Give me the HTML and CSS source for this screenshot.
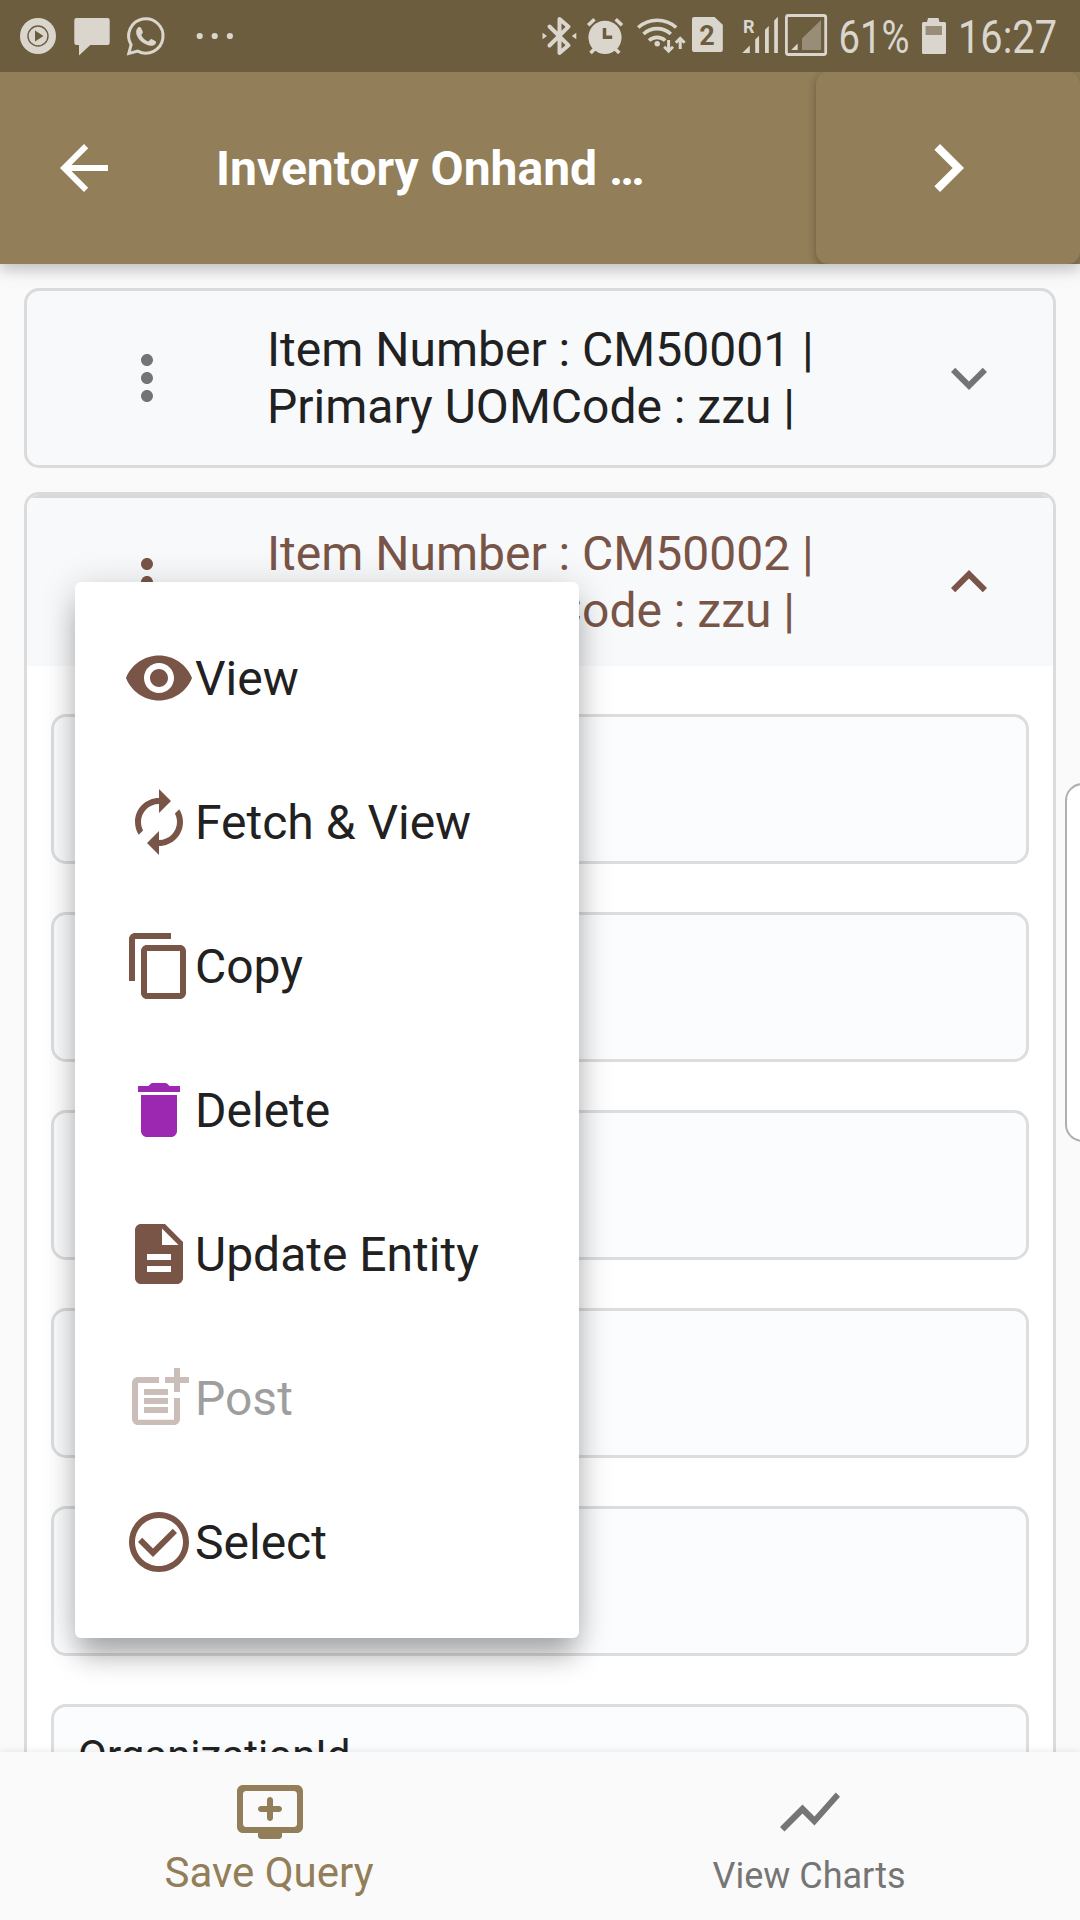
FILE: index.html
```html
<!DOCTYPE html>
<html lang="en">
<head>
<meta charset="utf-8">
<title>Inventory Onhand</title>
<link rel="stylesheet" href="styles.css">
</head>
<body>
<div class="screen">
  <div class="statusbar">
    <svg class="status-icons" width="240" height="72" viewBox="0 0 240 72">
      <circle cx="38" cy="36" r="18"/>
      <circle class="cut-line" cx="38" cy="36" r="10"/>
      <path class="cut" d="M35 30.5v11l8.5-5.5z"/>
      <path d="M76.500 18h31a2.200 2.200 0 0 1 2.200 2.200v22.600a2.200 2.200 0 0 1-2.200 2.200H90.300L79 55.500V45h-2.500a2.200 2.200 0 0 1-2.200-2.200V20.200a2.200 2.200 0 0 1 2.200-2.200z"/>
      <path class="line" stroke-width="3" d="M128.800 53.400l2.300-8.600a17.200 17.200 0 1 1 6.600 6.300z"/>
      <path d="M138.400 27.200c.7-.5 2.100-.4 2.600.6l1.900 4.300c.3.800-1.400 2.500-1.600 3 .9 2.700 4.300 5.600 7 6.300.8-.2 2.300-2.700 3.200-2.400l4.200 2.200c.6.600.2 2.400-.7 3.200-5 4.700-19-4-18.900-12.500.1-1.800.9-3.700 2.300-4.700z"/>
      <circle cx="199.700" cy="36" r="3.100"/><circle cx="214.700" cy="36" r="3.100"/><circle cx="229.900" cy="36" r="3.100"/>
    </svg>
    <div class="status-right">
      <svg class="status-icons" width="38" height="72" viewBox="541 0 38 72">
        <path class="line" stroke-width="4" stroke-linejoin="round" stroke-linecap="round" d="M549.500 26.500l19 18.800-9 7.700V19l9 7.700-19 18.800"/>
        <path d="M542.500 32.800l4.500 3.200-4.500 3.200zM576.300 32.800l-4.500 3.200 4.500 3.200z"/>
      </svg>
      <svg class="status-icons" width="52" height="72" viewBox="579 0 52 72">
        <circle cx="605" cy="37.300" r="16.600"/>
        <path class="line" stroke-width="3.600" d="M588.200 25.200l6.300-6M615.700 19.200l6.300 6M590.500 53l5-5M619.300 53l-5-5"/>
        <path class="hands" d="M604.500 28v9.200h7.700"/>
      </svg>
      <svg class="status-icons" width="56" height="72" viewBox="631 0 56 72">
        <path class="line" stroke-width="3.600" d="M638.200 27.500a28.500 28.500 0 0 1 38 0M643.500 34a20 20 0 0 1 27.300 0M649 40.500a12 12 0 0 1 16.200 0"/>
        <circle cx="657.200" cy="43.700" r="2.700"/>
        <path class="line" stroke-width="3" d="M668.600 40v11M664.200 46.800l4.400 4.400 4.400-4.400M680.200 49V38.500M675.800 42.700l4.400-4.400 4.400 4.400"/>
      </svg>
      <svg class="status-icons" width="48" height="72" viewBox="687 0 48 72">
        <path d="M694 17h20.500l8.300 7.800V50a2 2 0 0 1-2 2H694a2 2 0 0 1-2-2V19a2 2 0 0 1 2-2z"/>
        <text class="sim" x="707" y="45" text-anchor="middle">2</text>
      </svg>
      <svg class="status-icons" width="46" height="72" viewBox="735 0 46 72">
        <text class="roaming" x="743" y="32.500">R</text>
        <path d="M742.300 53l7.500-7.600V53zM755.200 53V39.500l3.900-3.700V53zM765 53V29.800l3.800-3.700V53zM774.200 53V20.500l3.700-3.700V53z"/>
      </svg>
      <svg class="status-icons" width="52" height="72" viewBox="781 0 52 72">
        <rect class="line" x="786.400" y="15.500" width="39.300" height="39" rx="2" stroke-width="2.800"/>
        <path d="M791.200 50l6.500-6.600V50z"/>
        <path class="dim" d="M802 50V38.500L821 20v30z"/>
      </svg>
      <svg class="status-icons" width="85" height="72" viewBox="833 0 85 72">
        <text class="clock" x="838.500" y="53" textLength="71" lengthAdjust="spacingAndGlyphs">61%</text>
      </svg>
      <svg class="status-icons" width="34" height="72" viewBox="918 0 34 72">
        <path d="M928 18h10.500l1 4h5a1.500 1.500 0 0 1 1.500 1.500V52.500a1.500 1.500 0 0 1-1.500 1.500h-21a1.500 1.500 0 0 1-1.500-1.500V23.500a1.500 1.500 0 0 1 1.500-1.500h3.500z"/>
        <path class="cut" d="M925.700 26h16.300v9h-16.300z"/><path class="dim" d="M925.700 26h16.300v9h-16.300z"/>
      </svg>
      <svg class="status-icons" width="128" height="72" viewBox="952 0 128 72">
        <text class="clock" x="958" y="53" textLength="99" lengthAdjust="spacingAndGlyphs">16:27</text>
      </svg>
    </div>
  </div>

  <header class="appbar">
    <svg class="icon" viewBox="0 0 24 24"><path d="M20 11H7.830l5.590-5.590L12 4l-8 8 8 8 1.410-1.410L7.830 13H20v-2z"/></svg>
    <h1 class="title">Inventory Onhand …</h1>
    <div class="next">
      <svg class="icon-large" viewBox="0 0 24 24"><path d="M10 6L8.590 7.410 13.170 12l-4.580 4.590L10 18l6-6z"/></svg>
    </div>
  </header>

  <main class="list">
    <section class="card">
      <div class="card-head">
        <svg class="icon" viewBox="0 0 24 24"><path d="M12 8c1.100 0 2-.9 2-2s-.9-2-2-2-2 .9-2 2 .9 2 2 2zm0 2c-1.100 0-2 .9-2 2s.9 2 2 2 2-.9 2-2-.9-2-2-2zm0 6c-1.100 0-2 .9-2 2s.9 2 2 2 2-.9 2-2-.9-2-2-2z"/></svg>
        <div class="card-title">Item Number : CM50001 |<br>Primary UOMCode : zzu |</div>
        <svg class="icon" viewBox="0 0 24 24"><path d="M16.590 8.590L12 13.170 7.410 8.590 6 10l6 6 6-6z"/></svg>
      </div>
    </section>
    <section class="card card-open">
      <div class="card-head">
        <svg class="icon" viewBox="0 0 24 24"><path d="M12 8c1.100 0 2-.9 2-2s-.9-2-2-2-2 .9-2 2 .9 2 2 2zm0 2c-1.100 0-2 .9-2 2s.9 2 2 2 2-.9 2-2-.9-2-2-2zm0 6c-1.100 0-2 .9-2 2s.9 2 2 2 2-.9 2-2-.9-2-2-2z"/></svg>
        <div class="card-title">Item Number : CM50002 |<br>Primary UOMCode : zzu |</div>
        <svg class="icon" viewBox="0 0 24 24"><path d="M12 8l-6 6 1.410 1.410L12 10.830l4.590 4.580L18 14z"/></svg>
      </div>
      <div class="fields">
        <div class="field"></div>
        <div class="field"></div>
        <div class="field"></div>
        <div class="field"></div>
        <div class="field"></div>
        <div class="field">OrganizationId</div>
      </div>
    </section>
  </main>

  <nav class="bottomnav">
    <div class="nav-item nav-active">
      <svg class="icon" viewBox="0 0 24 24"><path fill-rule="evenodd" d="M21 3H3c-1.110 0-2 .89-2 2v12c0 1.100.89 2 2 2h5v1c0 .55.45 1 1 1h6c.55 0 1-.45 1-1v-1h5c1.100 0 2-.9 2-2V5c0-1.110-.9-2-2-2zm-1 14H4c-.55 0-1-.45-1-1V6c0-.55.45-1 1-1h16c.55 0 1 .45 1 1v10c0 .55-.45 1-1 1z"/><path d="M15 10h-2V8c0-.55-.45-1-1-1s-1 .45-1 1v2H9c-.55 0-1 .45-1 1s.45 1 1 1h2v2c0 .55.45 1 1 1s1-.45 1-1v-2h2c.55 0 1-.45 1-1s-.45-1-1-1z"/></svg>
      <span>Save Query</span>
    </div>
    <div class="nav-item">
      <svg class="icon" viewBox="0 0 24 24"><path d="M3.500 18.490l6-6.010 4 4L22 6.920l-1.410-1.410-7.090 7.970-4-4L2 16.990z"/></svg>
      <span>View Charts</span>
    </div>
  </nav>

  <div class="edge-handle"></div>

  <div class="menu">
    <div class="menu-item">
      <svg class="icon" viewBox="0 0 24 24"><path d="M12 4.500C7 4.500 2.730 7.610 1 12c1.730 4.390 6 7.500 11 7.500s9.270-3.110 11-7.500c-1.730-4.390-6-7.500-11-7.500zM12 17c-2.760 0-5-2.240-5-5s2.240-5 5-5 5 2.240 5 5-2.240 5-5 5zm0-8c-1.660 0-3 1.340-3 3s1.340 3 3 3 3-1.340 3-3-1.340-3-3-3z"/></svg>
      <span>View</span>
    </div>
    <div class="menu-item">
      <svg class="icon" viewBox="0 0 24 24"><path d="M12 6v3l4-4-4-4v3c-4.420 0-8 3.580-8 8 0 1.570.46 3.030 1.240 4.260L6.700 14.800c-.45-.83-.7-1.790-.7-2.800 0-3.310 2.690-6 6-6zm6.760 1.740L17.300 9.200c.44.840.7 1.790.7 2.800 0 3.310-2.690 6-6 6v-3l-4 4 4 4v-3c4.420 0 8-3.580 8-8 0-1.570-.46-3.030-1.240-4.260z"/></svg>
      <span>Fetch &amp; View</span>
    </div>
    <div class="menu-item">
      <svg class="icon" viewBox="0 0 24 24"><path d="M16 1H4c-1.100 0-2 .9-2 2v14h2V3h12V1zm3 4H8c-1.100 0-2 .9-2 2v14c0 1.100.9 2 2 2h11c1.100 0 2-.9 2-2V7c0-1.100-.9-2-2-2zm0 16H8V7h11v14z"/></svg>
      <span>Copy</span>
    </div>
    <div class="menu-item">
      <svg class="icon icon-delete" viewBox="0 0 24 24"><path d="M6 19c0 1.100.9 2 2 2h8c1.100 0 2-.9 2-2V7H6v12zM19 4h-3.500l-.71-.71c-.18-.18-.44-.29-.7-.29H9.910c-.26 0-.52.11-.7.290L8.500 4H5v2h14V4z"/></svg>
      <span>Delete</span>
    </div>
    <div class="menu-item">
      <svg class="icon" viewBox="0 0 24 24"><path d="M14 2H6c-1.100 0-1.990.9-1.990 2L4 20c0 1.100.89 2 1.990 2H18c1.100 0 2-.9 2-2V8l-6-6zm2 16H8v-2h8v2zm0-4H8v-2h8v2zm-3-5V3.500L18.500 9H13z"/></svg>
      <span>Update Entity</span>
    </div>
    <div class="menu-item menu-disabled">
      <svg class="icon" viewBox="0 0 24 24"><path d="M17 19.220H5V7h7V5H5c-1.100 0-2 .9-2 2v12c0 1.100.9 2 2 2h12c1.100 0 2-.9 2-2v-7h-2v7.220zM19 2h-2v3h-3v2h3v3h2V7h3V5h-3zM7 9h8v2H7zM7 12h8v2H7zM7 15h8v2H7z"/></svg>
      <span>Post</span>
    </div>
    <div class="menu-item">
      <svg class="icon" viewBox="0 0 24 24"><path d="M16.590 7.580L10 14.170l-3.590-3.580L5 12l5 5 8-8zM12 2C6.480 2 2 6.480 2 12s4.480 10 10 10 10-4.480 10-10S17.520 2 12 2zm0 18c-4.420 0-8-3.580-8-8s3.580-8 8-8 8 3.580 8 8-3.580 8-8 8z"/></svg>
      <span>Select</span>
    </div>
  </div>
</div>
</body>
</html>
```
FILE: styles.css
```css
* { box-sizing: border-box; }

body {
  margin: 0;
  font-family: Roboto, sans-serif;
  font-size: 48px;
  line-height: 57px;
  color: #212121;
}

.screen {
  position: relative;
  display: flex;
  flex-direction: column;
  width: 1080px;
  height: 1920px;
  overflow: hidden;
  background: #fafafa;
}

svg { display: block; flex: none; fill: currentColor; }
.icon { width: 72px; height: 72px; }
.icon-large { width: 96px; height: 96px; }

/* System status bar */
.statusbar {
  display: flex;
  justify-content: space-between;
  height: 72px;
  flex: none;
  background: #6c5d3f;
  color: #dbd6cd;
}
.status-right { display: flex; }
.status-icons { overflow: visible; }
.line { fill: none; stroke: currentColor; }
.cut { fill: #6c5d3f; }
.cut-line { fill: none; stroke: #6c5d3f; stroke-width: 1.4; }
.hands { fill: none; stroke: #6c5d3f; stroke-width: 3.5; }
.dim { opacity: .4; }
.clock { font-size: 46px; }
.sim { font-size: 27px; font-weight: 700; fill: #6c5d3f; }
.roaming { font-size: 18px; font-weight: 700; }

/* App bar */
.appbar {
  position: relative;
  z-index: 1;
  display: flex;
  align-items: center;
  flex: none;
  height: 192px;
  padding-left: 48px;
  background: #927e58;
  color: #fff;
  box-shadow: 0 6px 12px rgba(0, 0, 0, .16), 0 3px 24px rgba(0, 0, 0, .1);
  clip-path: inset(0 0 -40px 0);
}
.title {
  flex: 1;
  margin: 0 0 0 96px;
  font-size: 48px;
  font-weight: 700;
}
.next {
  display: flex;
  align-items: center;
  justify-content: center;
  width: 264px;
  height: 192px;
  border-radius: 12px;
  background: #927e58;
  box-shadow: 0 3px 9px rgba(0, 0, 0, .3);
  clip-path: inset(0 0 0 -12px);
}

/* Item cards */
.list {
  display: flex;
  flex-direction: column;
  gap: 24px;
  flex: 1;
  min-height: 0;
  overflow: hidden;
  padding: 24px 24px 0;
}
.card {
  flex: none;
  overflow: hidden;
  border: 3px solid #dadbdd;
  border-radius: 15px;
  background: #f8f9fb;
}
.card-open { background: #fff; }
.card-head {
  display: flex;
  align-items: center;
  height: 174px;
  padding: 0 48px 0 84px;
  color: #737475;
}
.card-title { flex: 1; margin-left: 84px; color: #212121; }
.card-open .card-head {
  border-top: 3px solid #d8d9db;
  background: #f8f9fb;
}
.card-open .card-head { height: 171px; }
.card-open .card-head,
.card-open .card-title { color: #795548; }
.fields {
  display: flex;
  flex-direction: column;
  gap: 48px;
  padding: 48px 24px;
}
.field {
  height: 150px;
  padding: 24px;
  border: 3px solid #dcddde;
  border-radius: 15px;
  background: #fbfcfe;
  font-size: 42px;
  line-height: 49px;
}

/* Bottom navigation */
.bottomnav {
  position: relative;
  z-index: 1;
  display: flex;
  flex: none;
  height: 168px;
  background: #fafafa;
  box-shadow: 0 -1px 8px rgba(0, 0, 0, .08);
}
.nav-item {
  flex: 1;
  display: flex;
  flex-direction: column;
  align-items: center;
  padding-top: 24px;
  font-size: 36px;
  color: #757575;
}
.nav-item span { margin-right: 2px; line-height: 56px; }
.nav-active { font-size: 42px; color: #927e58; }
.nav-active span { line-height: 50px; }

/* Edge panel handle of the system, half off screen */
.edge-handle {
  position: absolute;
  top: 783px;
  right: -20px;
  width: 35px;
  height: 359px;
  border: 2px solid #afafaf;
  border-radius: 18px;
  background: #fff;
}

/* Popup menu */
.menu {
  position: absolute;
  z-index: 2;
  left: 75px;
  top: 582px;
  width: 504px;
  padding: 24px 48px;
  border-radius: 6px;
  background: #fff;
  box-shadow: 0 22px 28px -4px rgba(0, 0, 0, .26), 0 4px 36px rgba(0, 0, 0, .17);
}
.menu-item {
  display: flex;
  align-items: center;
  height: 144px;
}
.menu-item .icon { color: #795548; }
.menu-item .icon-delete { color: #9c27b0; }
.menu-disabled { color: #9e9e9e; }
.menu-disabled .icon { opacity: .38; }
```
